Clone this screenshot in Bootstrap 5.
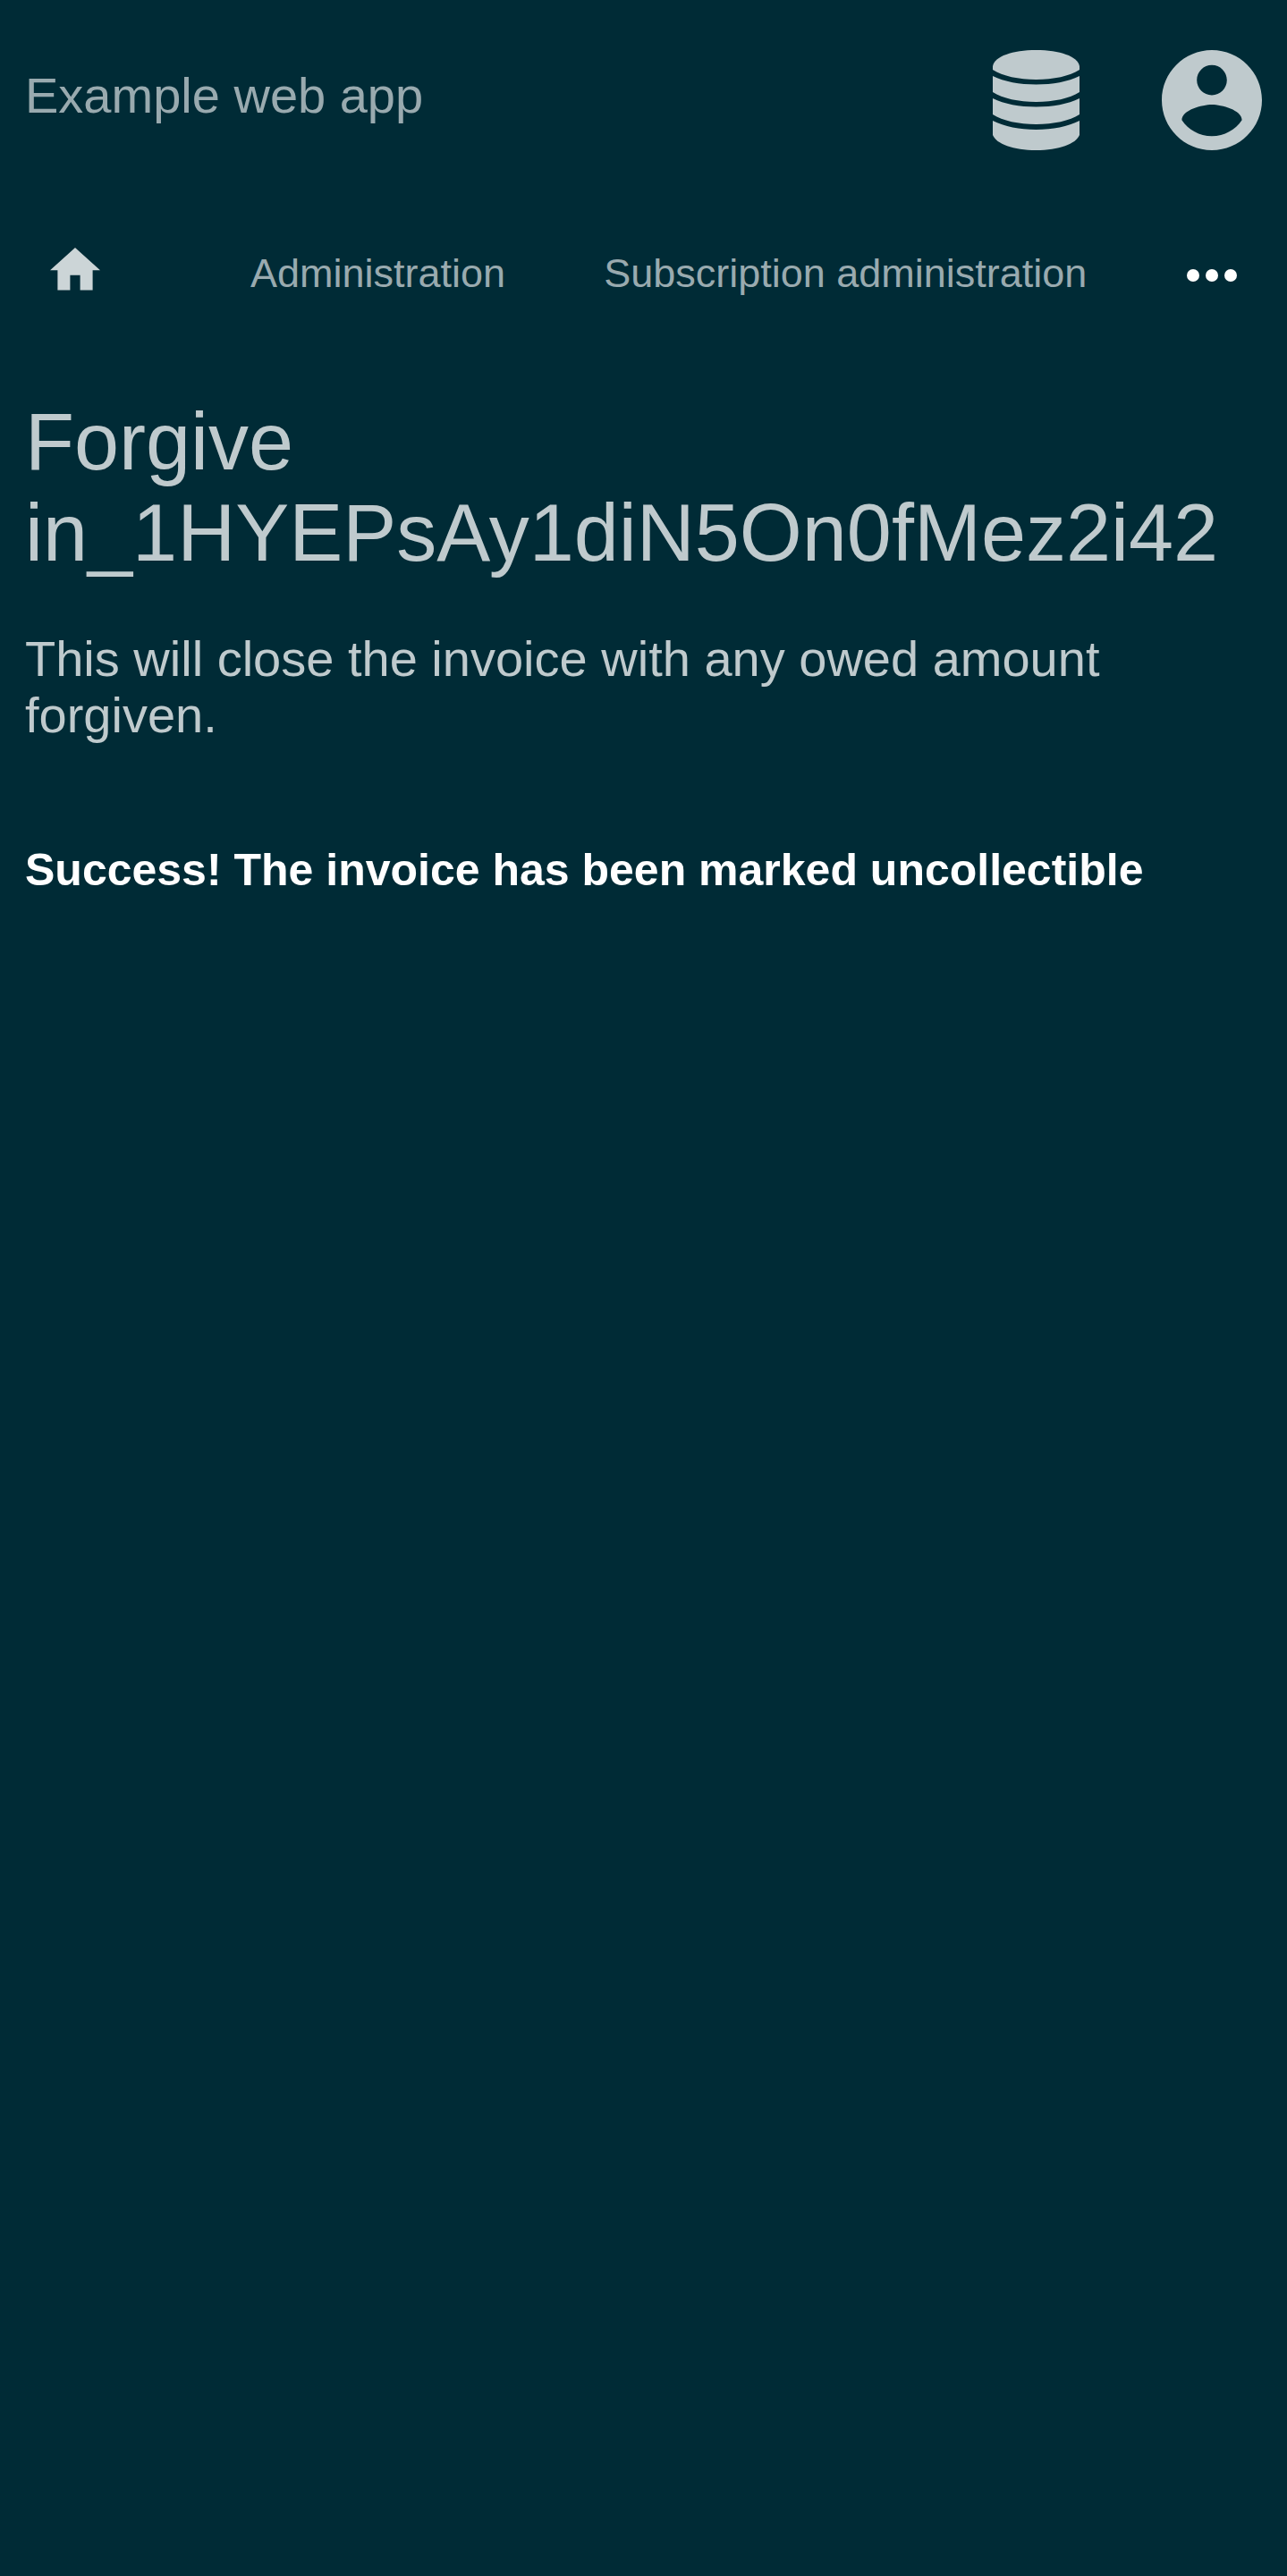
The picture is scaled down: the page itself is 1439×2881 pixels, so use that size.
<!DOCTYPE html>
<html lang="en">
<head>
<meta charset="utf-8">
<meta name="viewport" content="width=device-width, initial-scale=1">
<title>Forgive invoice</title>
<link href="https://cdn.jsdelivr.net/npm/bootstrap@5.3.0/dist/css/bootstrap.min.css" rel="stylesheet">
<style>
  body {
    background: #002b36;
    color: #bfcacd;
    font-family: "Liberation Sans", Arial, sans-serif;
    font-size: 56px;
    line-height: 63px;
  }
  svg { display: block; fill: currentColor; }
  .app-header { padding: 56px 28px 0; }
  .app-title { color: #99aaaf; padding-bottom: 12px; }
  .app-tools { gap: 92px; }
  .tool-btn { color: #bfcacd; }
  .app-menu { padding: 109px 56px 0; gap: 110px; font-size: 45px; line-height: 58px; }
  .menu-link { color: #99aaaf; }
  .menu-home { color: #ccd5d7; margin-right: 58px; }
  .app-main { padding: 108px 28px 56px; }
  .page-title { font-size: 90px; line-height: 102px; margin-bottom: 58px; overflow-wrap: anywhere; }
  .page-note { margin-bottom: 114px; }
  .page-success { font-size: 50px; line-height: 57px; }
</style>
</head>
<body>
<header class="app-header d-flex justify-content-between align-items-center">
  <a class="app-title text-decoration-none" href="#">Example web app</a>
  <div class="app-tools d-flex">
    <button class="tool-btn border-0 bg-transparent p-0" type="button" aria-label="Administrator menu">
      <svg width="97" height="112" viewBox="0 0 97 112" aria-hidden="true">
        <path d="M0 18C2 7 22 0 48.500 0S95 7 97 18V22C86 29 68 33 48.500 33S11 29 0 22Z"/>
        <path d="M0 29C13 35.500 30 38.500 48.500 38.500S84 35.500 97 29V47C86 54 68 58 48.500 58S11 54 0 47Z"/>
        <path d="M0 54C13 60.500 30 63.500 48.500 63.500S84 60.500 97 54V72C86 79 68 83 48.500 83S11 79 0 72Z"/>
        <path d="M0 79C13 85.500 30 89 48.500 89S84 85.500 97 79V95C93 105 74 112 48.500 112S4 105 0 95Z"/>
      </svg>
    </button>
    <button class="tool-btn border-0 bg-transparent p-0" type="button" aria-label="Account menu">
      <svg width="112" height="112" viewBox="2 2 20 20" aria-hidden="true">
        <path d="M12 2C6.480 2 2 6.480 2 12s4.480 10 10 10 10-4.480 10-10S17.520 2 12 2zm0 3c1.660 0 3 1.340 3 3s-1.340 3-3 3-3-1.340-3-3 1.340-3 3-3zm0 14.200c-2.500 0-4.710-1.280-6-3.220.03-1.990 4-3.080 6-3.080 1.990 0 5.970 1.090 6 3.080-1.290 1.940-3.500 3.220-6 3.220z"/>
      </svg>
    </button>
  </div>
</header>
<nav class="app-menu d-flex align-items-start" aria-label="Main">
  <a class="menu-home flex-shrink-0" href="#" aria-label="Home">
    <svg width="56" height="56" viewBox="2 3 20 20" aria-hidden="true"><path d="M10 20v-6h4v6h5v-8h3L12 3 2 12h3v8z"/></svg>
  </a>
  <a class="menu-link text-decoration-none text-nowrap" href="#">Administration</a>
  <a class="menu-link text-decoration-none text-nowrap" href="#">Subscription administration</a>
  <button class="border-0 bg-transparent p-0 text-white ms-auto" type="button" aria-label="More">
    <svg width="56" height="56" viewBox="0 0 56 56" aria-hidden="true"><circle cx="7" cy="31" r="7"/><circle cx="28" cy="31" r="7"/><circle cx="49" cy="31" r="7"/></svg>
  </button>
</nav>
<main class="app-main">
  <h1 class="page-title fw-normal">Forgive in_1HYEPsAy1diN5On0fMez2i42</h1>
  <p class="page-note">This will close the invoice with any owed amount forgiven.</p>
  <p class="page-success fw-bold text-white mb-0" role="status">Success! The invoice has been marked uncollectible</p>
</main>
<script src="https://cdn.jsdelivr.net/npm/bootstrap@5.3.0/dist/js/bootstrap.bundle.min.js"></script>
</body>
</html>
